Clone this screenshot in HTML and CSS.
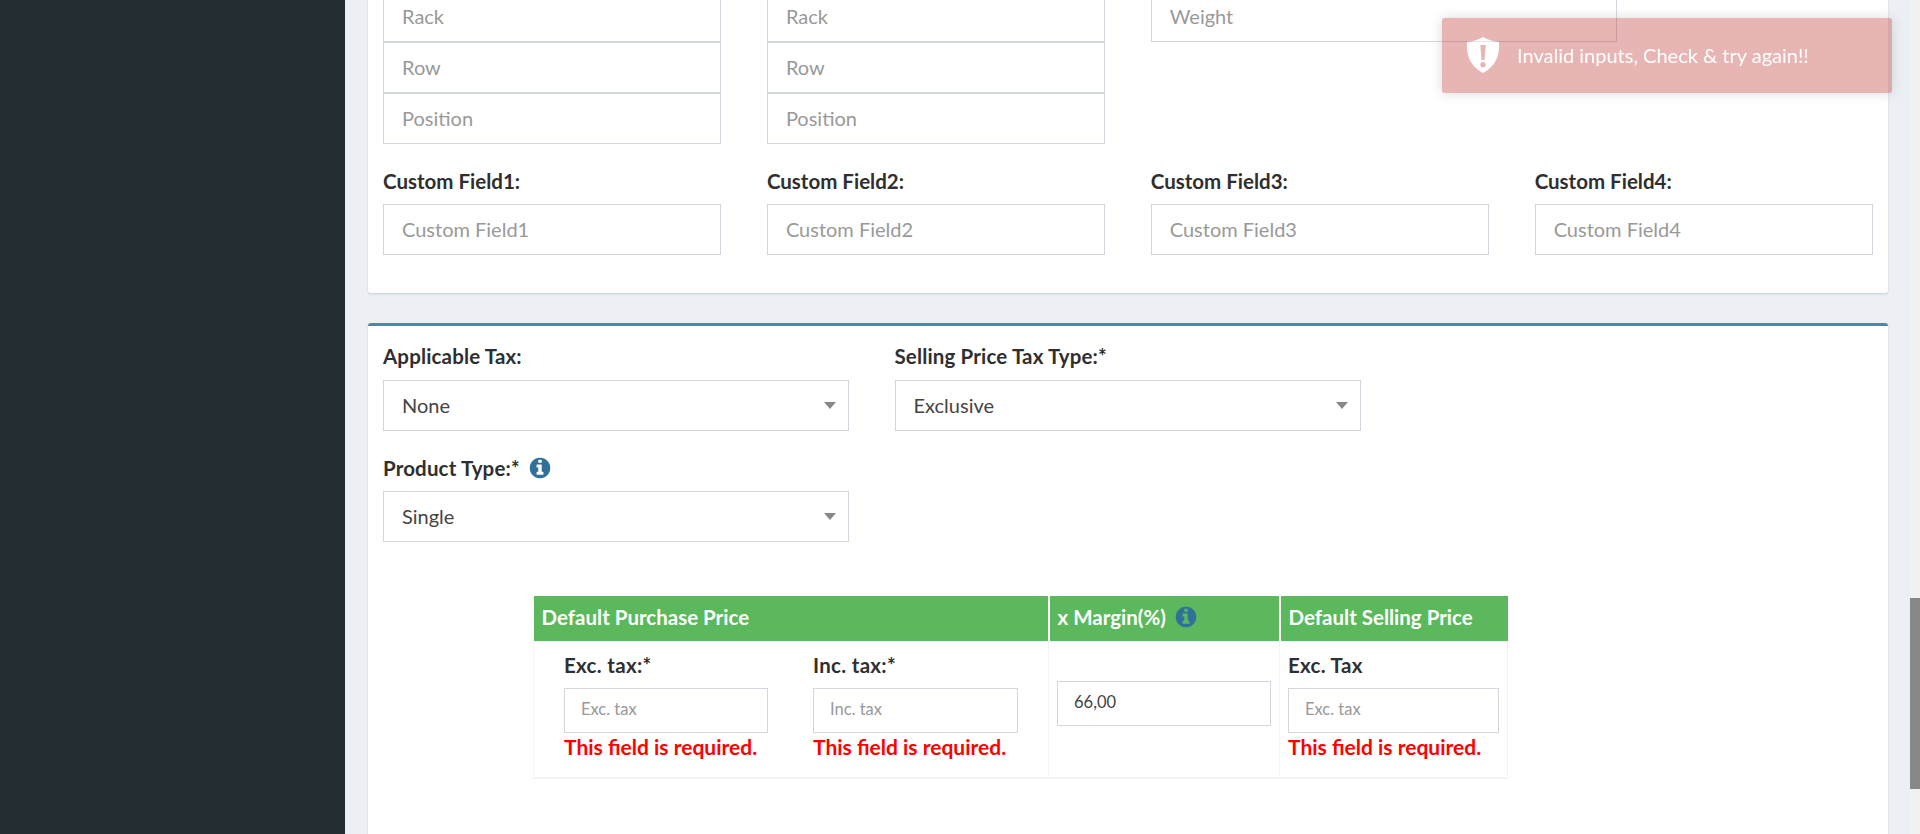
FILE: index.html
```html
<!DOCTYPE html>
<html>
<head>
    <title>Add new product</title>
    <link rel="stylesheet" href="styles.css">
</head>
<body>
    <svg class="defs" width="0" height="0">
        <symbol id="info" viewBox="0 0 1792 1792">
            <path d="M1152 1376v-160q0-14-9-23t-23-9h-96v-512q0-14-9-23t-23-9h-320q-14 0-23 9t-9 23v160q0 14 9 23t23 9h96v320h-96q-14 0-23 9t-9 23v160q0 14 9 23t23 9h448q14 0 23-9t9-23zm-128-896v-160q0-14-9-23t-23-9h-192q-14 0-23 9t-9 23v160q0 14 9 23t23 9h192q14 0 23-9t9-23zm640 416q0 209-103 385.5t-279.5 279.5-385.5 103-385.5-103-279.5-279.5-103-385.5 103-385.5 279.5-279.5 385.5-103 385.5 103 279.5 279.5 103 385.5z"/>
        </symbol>
    </svg>

    <div class="wrapper">
        <div class="sidebar"></div>

        <div class="content">
            <div class="box box-first">
                <div class="row-4">
                    <div class="stack">
                        <input type="text" placeholder="Rack">
                        <input type="text" placeholder="Row">
                        <input type="text" placeholder="Position">
                    </div>
                    <div class="stack">
                        <input type="text" placeholder="Rack">
                        <input type="text" placeholder="Row">
                        <input type="text" placeholder="Position">
                    </div>
                    <div class="stack">
                        <input type="text" class="weight" placeholder="Weight">
                    </div>
                    <div></div>
                </div>
                <div class="row-4 custom-row">
                    <div>
                        <label>Custom Field1:</label>
                        <input type="text" placeholder="Custom Field1">
                    </div>
                    <div>
                        <label>Custom Field2:</label>
                        <input type="text" placeholder="Custom Field2">
                    </div>
                    <div>
                        <label>Custom Field3:</label>
                        <input type="text" placeholder="Custom Field3">
                    </div>
                    <div>
                        <label>Custom Field4:</label>
                        <input type="text" placeholder="Custom Field4">
                    </div>
                </div>
            </div>

            <div class="box box-primary">
                <div class="row-2">
                    <div>
                        <label>Applicable Tax:</label>
                        <div class="select"><span>None</span><i class="caret"></i></div>
                    </div>
                    <div>
                        <label>Selling Price Tax Type:*</label>
                        <div class="select"><span>Exclusive</span><i class="caret"></i></div>
                    </div>
                </div>
                <div class="row-2 type-row">
                    <div>
                        <label>Product Type:* <svg class="icon-info"><use href="#info"></use></svg></label>
                        <div class="select"><span>Single</span><i class="caret"></i></div>
                    </div>
                </div>

                <table class="price-table">
                    <thead>
                        <tr>
                            <th class="col-purchase">Default Purchase Price</th>
                            <th class="col-margin">x Margin(%) <svg class="icon-info"><use href="#info"></use></svg></th>
                            <th class="col-selling">Default Selling Price</th>
                        </tr>
                    </thead>
                    <tbody>
                        <tr>
                            <td class="cell-purchase">
                                <div class="price-pair">
                                    <div>
                                        <label>Exc. tax:*</label>
                                        <input type="text" class="input-sm" placeholder="Exc. tax">
                                        <div class="error">This field is required.</div>
                                    </div>
                                    <div>
                                        <label>Inc. tax:*</label>
                                        <input type="text" class="input-sm" placeholder="Inc. tax">
                                        <div class="error">This field is required.</div>
                                    </div>
                                </div>
                            </td>
                            <td class="cell-margin">
                                <input type="text" class="input-sm" value="66,00">
                            </td>
                            <td class="cell-selling">
                                <label>Exc. Tax</label>
                                <input type="text" class="input-sm" placeholder="Exc. tax">
                                <div class="error">This field is required.</div>
                            </td>
                        </tr>
                    </tbody>
                </table>
            </div>
        </div>

        <div class="scrollbar"><div class="thumb"></div></div>
    </div>

    <div class="toast">
        <svg class="toast-icon" viewBox="0 0 34 36">
            <path fill-rule="evenodd" d="M17 0C22 3 28 4.500 33 5C34 18 30 29 17 36C4 29 0 18 1 5C6 4.500 12 3 17 0ZM14.300 8L15.500 23H18.500L19.700 8ZM17 25A2.700 2.700 0 1 0 17 30.400A2.700 2.700 0 1 0 17 25Z"/>
        </svg>
        <span>Invalid inputs, Check &amp; try again!!</span>
    </div>
</body>
</html>
```

FILE: styles.css
```css
* {
    box-sizing: border-box;
}

body {
    margin: 0;
    font-family: Lato, "Open Sans", sans-serif;
    font-size: 20px;
    color: #333;
    background-color: #ecf0f5;
}

.defs {
    display: none;
}

.wrapper {
    display: flex;
    height: 834px;
    overflow: hidden;
}

.sidebar {
    width: 345px;
    flex: none;
    background-color: #222d32;
}

.content {
    flex: 1;
    min-width: 0;
    padding: 0 22px 0 23px;
}

.scrollbar {
    width: 10px;
    flex: none;
    background-color: #f1f1f1;
}

.thumb {
    height: 191px;
    margin-top: 598px;
    background-color: #888;
}

.box {
    background-color: #fff;
    border-radius: 3px;
    box-shadow: 0 1px 2px rgba(0, 0, 0, 0.15);
    padding: 0 15px;
}

.box-first {
    margin-top: -9px;
    padding-bottom: 38px;
}

.box-primary {
    margin-top: 30px;
    border-top: 3px solid #3c8dbc;
    padding-top: 19px;
    height: 600px;
}

label {
    display: block;
    height: 24px;
    line-height: 24px;
    margin-bottom: 11px;
    font-size: 20.500px;
    font-weight: bold;
    color: #2f2f2f;
    white-space: nowrap;
}

.box-primary label {
    line-height: 22px;
    letter-spacing: 0.150px;
}

input {
    display: block;
    width: 100%;
    height: 51px;
    padding: 0 18px 2px;
    border: 1px solid #d2d6de;
    font-family: inherit;
    font-size: 20px;
    color: #444;
    background-color: #fff;
    border-radius: 0;
    outline: none;
}

input::placeholder {
    color: #999;
    opacity: 1;
}

.row-4 {
    display: grid;
    grid-template-columns: repeat(4, minmax(0, 1fr));
    column-gap: 45.500px;
}

.row-2 {
    display: grid;
    grid-template-columns: 466px 466px;
    column-gap: 45.500px;
}

.custom-row {
    margin-top: 25px;
}

.type-row {
    margin-top: 25px;
}

.weight {
    width: 466px;
}

.select {
    display: flex;
    align-items: center;
    justify-content: space-between;
    height: 51px;
    padding: 0 12px 2px 18px;
    border: 1px solid #d2d6de;
    color: #444;
}

.caret {
    width: 0;
    height: 0;
    margin-top: 2px;
    border-left: 6px solid transparent;
    border-right: 6px solid transparent;
    border-top: 7px solid #888;
}

.icon-info {
    width: 24px;
    height: 24px;
    margin-left: 3px;
    vertical-align: -4px;
    fill: #2f7199;
}

.price-table {
    width: 975px;
    margin: 54px 0 0 150px;
    border-collapse: collapse;
    table-layout: fixed;
}

.price-table th {
    height: 45px;
    padding: 0 8px 2px;
    text-align: left;
    font-size: 20.500px;
    color: #fff;
    background-color: #5cb85c;
    border-right: 2px solid #fff;
    white-space: nowrap;
}

.price-table th:last-child {
    border-right: none;
}

.col-purchase {
    width: 515px;
}

.col-margin {
    width: 231px;
}

.price-table td {
    height: 137px;
    padding: 12px 8px 0;
    vertical-align: top;
    border: 1px solid #f4f4f4;
    border-bottom-width: 2px;
}

.price-table label {
    margin-bottom: 10px;
    letter-spacing: 0.300px;
}

.price-pair {
    display: grid;
    grid-template-columns: 204px 205px;
    column-gap: 45px;
}

.cell-purchase {
    padding-left: 30px !important;
}

.price-table .cell-margin {
    padding-top: 39px;
}

.input-sm {
    height: 45px;
    padding: 0 16px 2px;
    font-size: 16.500px;
}

.error {
    margin-top: 3px;
    line-height: 22px;
    font-size: 21px;
    font-weight: bold;
    color: #f00;
    white-space: nowrap;
}

.toast {
    position: fixed;
    top: 18px;
    left: 1442px;
    width: 450px;
    height: 75px;
    display: flex;
    align-items: center;
    gap: 17px;
    padding: 0 0 2px 24px;
    font-size: 20px;
    color: #fff;
    background-color: #bd362f;
    border-radius: 3px;
    box-shadow: 0 0 12px #999;
    opacity: 0.36;
}

.toast-icon {
    width: 34px;
    height: 36px;
    fill: #fff;
}
```
